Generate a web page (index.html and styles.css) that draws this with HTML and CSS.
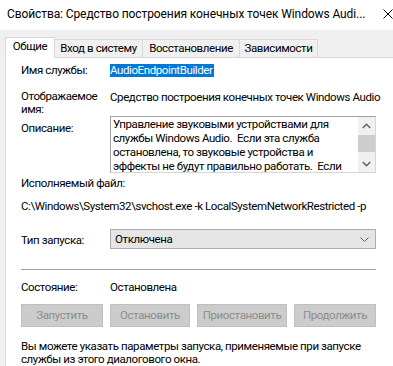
FILE: index.html
```html
<!DOCTYPE html>
<html lang="ru">

<head>
    <meta charset="UTF-8">
    <meta name="viewport" content="width=device-width, initial-scale=1.0">
    <title>Свойства: AudioEndpointBuilder</title>
    <link rel="stylesheet" href="styles.css">
</head>

<body>
    <div class="titlebar">
        <span class="title">Свойства: Средство построения конечных точек Windows Audi...</span>
        <svg class="close" width="10" height="10" viewBox="0 0 10 10">
            <path d="M0.5 0.5 L9.5 9.5 M9.5 0.5 L0.5 9.5" stroke="#000" stroke-width="1" fill="none" />
        </svg>
    </div>
    <div class="dialog">
        <div class="tabs">
            <div class="tab tab-general active">Общие</div>
            <div class="tab tab-logon">Вход в систему</div>
            <div class="tab tab-recovery">Восстановление</div>
            <div class="tab tab-deps">Зависимости</div>
        </div>
        <div class="panel">
            <div class="row row-name">
                <span class="label">Имя службы:</span>
                <span class="value"><span class="selected">AudioEndpointBuilder</span></span>
            </div>
            <div class="row row-display">
                <span class="label">Отображаемое<br>имя:</span>
                <span class="value">Средство построения конечных точек Windows Audio</span>
            </div>
            <div class="row row-desc">
                <span class="label">Описание:</span>
                <div class="memo">
                    <div class="memo-text">Управление звуковыми устройствами для
службы Windows Audio.  Если эта служба
остановлена, то звуковые устройства и
эффекты не будут правильно работать.  Если</div>
                    <div class="scrollbar">
                        <div class="scroll-btn">
                            <svg width="9" height="6" viewBox="0 0 9 6">
                                <path d="M0.8 5 L4.5 1.3 L8.2 5" stroke="#606060" stroke-width="1.4" fill="none" />
                            </svg>
                        </div>
                        <div class="scroll-thumb"></div>
                        <div class="scroll-track"></div>
                        <div class="scroll-btn">
                            <svg width="9" height="6" viewBox="0 0 9 6">
                                <path d="M0.8 1 L4.5 4.7 L8.2 1" stroke="#606060" stroke-width="1.4" fill="none" />
                            </svg>
                        </div>
                    </div>
                </div>
            </div>
            <div class="exe-label">Исполняемый файл:</div>
            <div class="exe-path">C:\Windows\System32\svchost.exe -k LocalSystemNetworkRestricted -p</div>
            <div class="row row-startup">
                <span class="label">Тип запуска:</span>
                <div class="combo">
                    <span>Отключена</span>
                    <svg width="9" height="5" viewBox="0 0 9 5">
                        <path d="M0.5 0.5 L4.5 4.5 L8.5 0.5" stroke="#606060" stroke-width="1" fill="none" />
                    </svg>
                </div>
            </div>
            <div class="separator"></div>
            <div class="row row-status">
                <span class="label">Состояние:</span>
                <span class="value">Остановлена</span>
            </div>
            <div class="buttons">
                <div class="btn">Запустить</div>
                <div class="btn">Остановить</div>
                <div class="btn">Приостановить</div>
                <div class="btn">Продолжить</div>
            </div>
            <p class="note">Вы можете указать параметры запуска, применяемые при запуске<br>службы из этого диалогового окна.</p>
        </div>
    </div>
</body>

</html>
```

FILE: styles.css
```css
* {
    margin: 0;
    padding: 0;
    box-sizing: border-box;
}

html,
body {
    width: 393px;
    height: 366px;
    overflow: hidden;
    background-color: #fff;
    font-family: Roboto, "Noto Sans", sans-serif;
    font-size: 11.5px;
    letter-spacing: -0.4px;
    line-height: 13px;
    color: #000;
}

.titlebar {
    height: 30px;
    display: flex;
    align-items: center;
    justify-content: space-between;
    padding: 0 0 2px 7px;
    background-color: #fff;
    font-size: 12px;
    letter-spacing: -0.1px;
}

.close {
    display: block;
}

.dialog {
    height: 336px;
    background-color: #f0f0f0;
    display: flex;
    flex-direction: column;
}

.tabs {
    display: flex;
    align-items: flex-end;
    height: 20px;
    margin-top: 7px;
    padding-left: 5px;
    position: relative;
    z-index: 1;
}

.tab {
    height: 18px;
    display: flex;
    align-items: center;
    justify-content: center;
    border: 1px solid #d9d9d9;
    border-left: none;
    border-bottom: none;
    background-color: #f0f0f0;
    white-space: nowrap;
}

.tab.active {
    height: 21px;
    margin-bottom: -1px;
    border-left: 1px solid #d9d9d9;
    background-color: #fff;
    padding-bottom: 3px;
}

.tab-general {
    width: 50px;
}

.tab-logon {
    width: 88px;
}

.tab-recovery {
    width: 97px;
}

.tab-deps {
    width: 78px;
}

.panel {
    flex: 1;
    margin-left: 5px;
    background-color: #fff;
    border: 1px solid #d9d9d9;
    border-right: none;
    border-bottom: none;
    padding: 6px 0 0 15px;
}

.row {
    display: grid;
    grid-template-columns: 89px 1fr;
    width: 355px;
}

.selected {
    display: inline-block;
    background-color: #0078d7;
    color: #fff;
    padding-right: 1px;
}

.row-display {
    margin-top: 13px;
}

.row-display .value {
    width: 274px;
    padding-top: 1px;
    white-space: nowrap;
    overflow: hidden;
}

.row-desc .label {
    padding-top: 6px;
}

.memo {
    display: flex;
    height: 57px;
    border: 1px solid #a0a0a0;
    border-right-color: #d6d6d6;
    border-bottom-color: #d6d6d6;
    overflow: hidden;
}

.memo-text {
    flex: 1;
    padding-left: 2px;
    line-height: 14px;
    white-space: pre;
    overflow: hidden;
}

.scrollbar {
    width: 17px;
    display: flex;
    flex-direction: column;
    background-color: #f0f0f0;
}

.scroll-btn {
    height: 17px;
    display: flex;
    align-items: center;
    justify-content: center;
}

.scroll-thumb {
    height: 17px;
    margin-top: 1px;
    background-color: #cdcdcd;
}

.scroll-track {
    flex: 1;
}

.exe-label {
    margin-top: 4px;
}

.exe-path {
    margin-top: 10px;
    white-space: nowrap;
}

.row-startup {
    margin-top: 16px;
}

.row-startup .label {
    line-height: 20px;
    padding-top: 1px;
}

.combo {
    height: 20px;
    display: flex;
    align-items: center;
    justify-content: space-between;
    padding: 0 6px 0 4px;
    background-color: #e5e5e5;
    border: 1px solid #adadad;
}

.separator {
    width: 355px;
    height: 1px;
    margin-top: 19px;
    background-color: #a0a0a0;
}

.row-status {
    margin-top: 11px;
}

.buttons {
    display: grid;
    grid-template-columns: 82px 80px 90px 82px;
    column-gap: 7px;
    margin-top: 10px;
}

.btn {
    height: 23px;
    display: flex;
    align-items: center;
    justify-content: center;
    background-color: #cccccc;
    border: 1px solid #bfbfbf;
    color: #8c8c8c;
    white-space: nowrap;
}

.note {
    margin-top: 13px;
    line-height: 13px;
    white-space: nowrap;
}
```
